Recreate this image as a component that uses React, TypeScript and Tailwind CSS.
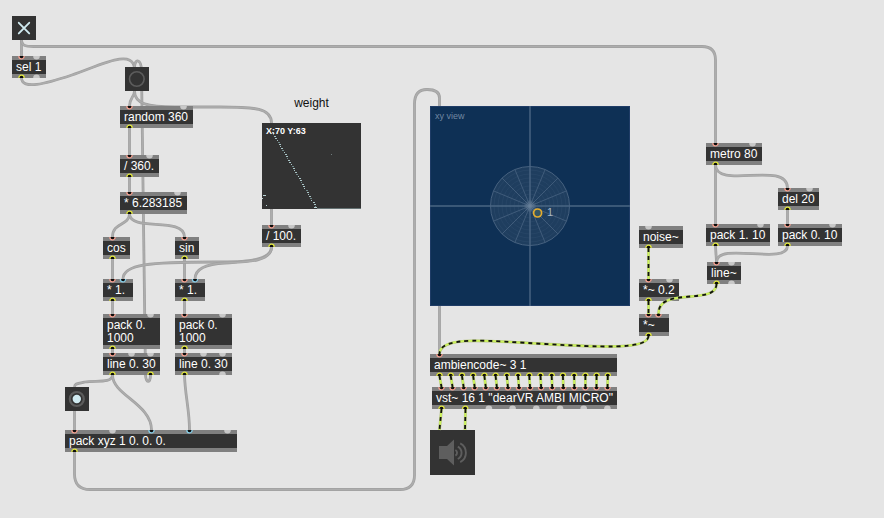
import React from "react";

type PortKind = "hot" | "cold" | "idle" | "out";
type Port = [number, PortKind];

interface PatchObject {
  id: string;
  text: string;
  x: number;
  y: number;
  w: number;
  ins: Port[];
  outs: Port[];
}

const range = (n: number) => Array.from({ length: n }, (_, i) => i);

const ambiOut = (i: number) => 9.5 + i * 11.22;
const vstIn = (i: number) => 9.5 + i * 11.07;

const OUT: Port[] = [[9.5, "out"]];
const IN: Port[] = [[9.5, "hot"]];

const objects: PatchObject[] = [
  { id: "sel", text: "sel 1", x: 12, y: 56, w: 34, ins: [...IN, [24.5, "idle"]], outs: [...OUT, [24.5, "idle"]] },
  { id: "random", text: "random 360", x: 120, y: 106, w: 73, ins: [...IN, [63.5, "idle"]], outs: OUT },
  { id: "div360", text: "/ 360.", x: 120, y: 155, w: 39, ins: [...IN, [29.5, "idle"]], outs: OUT },
  { id: "twopi", text: "* 6.283185", x: 120, y: 192, w: 67, ins: [...IN, [57.5, "idle"]], outs: OUT },
  { id: "cos", text: "cos", x: 103, y: 237, w: 27, ins: IN, outs: OUT },
  { id: "sin", text: "sin", x: 175, y: 237, w: 24, ins: IN, outs: OUT },
  { id: "mulA", text: "* 1.", x: 103, y: 279, w: 30, ins: [...IN, [20, "cold"]], outs: OUT },
  { id: "mulB", text: "* 1.", x: 175, y: 279, w: 30, ins: [...IN, [20, "cold"]], outs: OUT },
  { id: "packA", text: "pack 0. 1000", x: 103, y: 314, w: 57, ins: [...IN, [47.5, "idle"]], outs: OUT },
  { id: "packB", text: "pack 0. 1000", x: 175, y: 314, w: 57, ins: [...IN, [47.5, "idle"]], outs: OUT },
  { id: "lineA", text: "line 0. 30", x: 103, y: 353, w: 57, ins: [...IN, [28.5, "idle"], [47.5, "idle"]], outs: [...OUT, [47.5, "out"]] },
  { id: "lineB", text: "line 0. 30", x: 175, y: 353, w: 57, ins: [...IN, [28.5, "idle"], [47.5, "idle"]], outs: [...OUT, [47.5, "idle"]] },
  { id: "packxyz", text: "pack xyz 1 0. 0. 0.", x: 65, y: 430, w: 172, ins: [...IN, [47.5, "idle"], [86.5, "cold"], [124.5, "cold"], [162.5, "idle"]], outs: OUT },
  { id: "div100", text: "/ 100.", x: 262, y: 225, w: 39, ins: [...IN, [29.5, "idle"]], outs: OUT },
  { id: "ambi", text: "ambiencode~ 3 1", x: 430, y: 354, w: 187, ins: IN, outs: range(16).map((i): Port => [ambiOut(i), "out"]) },
  { id: "vst", text: 'vst~ 16 1 "dearVR AMBI MICRO"', x: 432, y: 387, w: 185, ins: range(16).map((i): Port => [vstIn(i), "hot"]), outs: range(8).map((i): Port => [9.5 + i * 23.7, i < 2 ? "out" : "idle"]) },
  { id: "noise", text: "noise~", x: 639, y: 226, w: 44, ins: [[9.5, "idle"]], outs: OUT },
  { id: "gain", text: "*~ 0.2", x: 639, y: 279, w: 40, ins: [...IN, [30.5, "idle"]], outs: OUT },
  { id: "vca", text: "*~", x: 639, y: 314, w: 30, ins: [...IN, [19.5, "hot"]], outs: OUT },
  { id: "metro", text: "metro 80", x: 706, y: 143, w: 56, ins: [...IN, [46.5, "idle"]], outs: OUT },
  { id: "del", text: "del 20", x: 778, y: 188, w: 41, ins: [...IN, [31.5, "idle"]], outs: OUT },
  { id: "pack1", text: "pack 1. 10", x: 706, y: 224, w: 64, ins: [...IN, [54.5, "idle"]], outs: OUT },
  { id: "pack0", text: "pack 0. 10", x: 778, y: 224, w: 64, ins: [...IN, [54.5, "idle"]], outs: OUT },
  { id: "linesig", text: "line~", x: 707, y: 262, w: 34, ins: [...IN, [24.5, "idle"]], outs: [...OUT, [24.5, "idle"]] },
];

const controlCords = [
  "M21.5 40V56",
  "M21.5 40C21.5 45 24 46.5 34 46.5H702Q715.5 46.5 715.5 60V143",
  "M21.5 78C22 90 45 84 72 75S132 48 134.5 68",
  "M150.5 375C150.5 383 146 384 145.5 375L141.5 70C141 59 135 58 134.5 67",
  "M134.5 91C134.5 97 129.5 98 129.5 106",
  "M134.5 91C134.5 104 148 107 175 107H220C255 107 271.5 108 271.5 123",
  "M129.5 128V155",
  "M129.5 177V192",
  "M129.5 214C129 226 112.5 222 112.5 237",
  "M129.5 214C130 232 184.5 216 184.5 237",
  "M112.5 259V279",
  "M184.5 259V279",
  "M271.5 209V225",
  "M271.5 247C271.5 262 240 262 215 262C150 262 123 264 123 279",
  "M271.5 247C271.5 262 245 262 225 263S195 270 195 279",
  "M112.5 301V314",
  "M184.5 301V314",
  "M112.5 349V353",
  "M184.5 349V353",
  "M112.5 375C112 384 95 380 85 382S74.5 384 74.5 388",
  "M112.5 375C112.5 395 151.5 404 151.5 430",
  "M184.5 375C185 395 189.5 410 189.5 430",
  "M74.5 411V430",
  "M74.5 452V474Q74.5 489.5 90 489.5H400Q414.5 489.5 414.5 475V104Q414.5 89.5 427 89.5Q439.5 89.5 439.5 98V106",
  "M439.5 306V354",
  "M715.5 165V224",
  "M715.5 165C716 190 787 160 787.5 188",
  "M787.5 210V224",
  "M715.5 246L716.5 262",
  "M787.5 246C787 266 717 241 716.5 262",
];

const signalCords = [
  "M648.5 248V279",
  "M648.5 301V314",
  "M716.5 284C716 306 658 286 658.5 314",
  "M648.5 336C648 350 600 347 545 344S440 335 439.5 354",
  "M441.5 409L439.5 430",
  "M465.5 409L465 430",
  ...range(16).map((i) => `M${430 + ambiOut(i)} 376L${432 + vstIn(i)} 387`),
];

const ring: Record<PortKind, string> = {
  hot: "#f5a090",
  cold: "#86cfe9",
  out: "#e0e63e",
  idle: "#c8c8c8",
};

function Ports({ ports, side }: { ports: Port[]; side: "top" | "bottom" }) {
  const cy = side === "top" ? 0.3 : 3.7;
  return (
    <svg className="block h-1 w-full shrink-0 bg-[#808080]" aria-hidden="true">
      {ports.map(([cx, kind]) =>
        kind === "idle" ? (
          <circle key={cx} cx={cx} cy={cy} r={3.3} fill={ring.idle} />
        ) : (
          <circle key={cx} cx={cx} cy={cy} r={2.6} fill="#0c0c0c" stroke={ring[kind]} strokeWidth={1.3} />
        )
      )}
    </svg>
  );
}

function ObjectBox({ o }: { o: PatchObject }) {
  const twoLines = o.text === "pack 0. 1000";
  return (
    <div className="absolute flex flex-col bg-[#333333]" style={{ left: o.x, top: o.y, width: o.w }}>
      <Ports ports={o.ins} side="top" />
      <div
        className={
          twoLines
            ? "pl-1 pt-px text-[12px] leading-[13px] text-white"
            : "whitespace-nowrap pl-1 pt-px text-[12px] leading-[13px] text-white"
        }
      >
        {o.text}
      </div>
      <Ports ports={o.outs} side="bottom" />
    </div>
  );
}

function Toggle() {
  return (
    <label className="absolute left-3 top-4 block size-6 bg-[#333333]">
      <input type="checkbox" defaultChecked aria-label="Start" className="peer block size-6 appearance-none" />
      <svg viewBox="0 0 24 24" className="pointer-events-none absolute inset-0 hidden size-6 peer-checked:block" aria-hidden="true">
        <path d="M6.8 6.8L17.2 17.4M17.2 6.8L6.8 17.4" stroke="#d0eaf0" strokeWidth={1.9} strokeLinecap="round" />
      </svg>
    </label>
  );
}

function Bang({ className, lit, label }: { className: string; lit?: boolean; label: string }) {
  return (
    <button type="button" aria-label={label} className={`absolute block size-6 bg-[#333333] ${className}`}>
      <svg viewBox="0 0 24 24" className="size-6" aria-hidden="true">
        <circle cx={11.8} cy={12} r={lit ? 7 : 7.3} fill="none" stroke="#5c5c5c" strokeWidth={lit ? 2.2 : 1.6} />
        {lit && <circle cx={11.8} cy={12} r={4.2} fill="#d0eaf0" />}
      </svg>
    </button>
  );
}

function WeightTable() {
  return (
    <figure className="absolute left-[262px] top-24 flex w-[99px] flex-col items-center gap-[13px]">
      <figcaption className="text-[12px] leading-[14px] text-[#111111]">weight</figcaption>
      <div className="relative h-[86px] w-full bg-[#333333] pl-1 pt-0.5 text-[9px] font-bold leading-[13px] text-white">
        <svg className="absolute inset-0 size-full" aria-hidden="true">
          {range(38).map((i) => (
            <rect
              key={i}
              x={Math.round(10 + i * 1.16)}
              y={9 + i * 2}
              width={i % 3 === 1 ? 1 : 2}
              height={1}
              fill={i % 4 === 1 ? "#71898a" : "#a9c4c6"}
            />
          ))}
          <path d="M1 72.5H4M0 75.5H1M4 82.5H5M52 84.5H55" stroke="#b9d3d5" />
          <path d="M55 85.5H99" stroke="#657273" />
          <path d="M69 31.5H70" stroke="#6f7c7d" />
        </svg>
        <span className="relative block">X:70 Y:63</span>
      </div>
    </figure>
  );
}

function XYView() {
  return (
    <div className="absolute left-[430px] top-[106px] size-[200px] bg-[#0e3055]">
      <svg viewBox="0 0 200 200" className="absolute inset-0 size-full" aria-label="Source position">
        <defs>
          <radialGradient id="hub">
            <stop offset="0" stopColor="#8fa3b8" stopOpacity={0.5} />
            <stop offset="1" stopColor="#8fa3b8" stopOpacity={0} />
          </radialGradient>
        </defs>
        <rect x={0.5} y={0.5} width={199} height={199} fill="none" stroke="#1f3c66" />
        <circle cx={100} cy={100} r={39.5} fill="#1f3e5f" stroke="#46617f" />
        {range(9).map((i) => (
          <circle key={i} cx={100} cy={100} r={4 + i * 4} fill="none" stroke="#2a4869" strokeWidth={0.7} />
        ))}
        {range(16)
          .filter((i) => i % 4 !== 0)
          .map((i) => {
            const a = (i * Math.PI) / 8;
            return (
              <path key={i} d={`M100 100L${100 + 39.5 * Math.cos(a)} ${100 + 39.5 * Math.sin(a)}`} stroke="#405c7b" strokeWidth={1} />
            );
          })}
        <path d="M0 100H200M100 0V200" stroke="#4a6583" strokeWidth={1.4} />
        <circle cx={100} cy={100} r={7} fill="url(#hub)" />
        <circle cx={107.6} cy={107} r={4} fill="#365663" stroke="#e6ad2e" strokeWidth={1.7} />
        <text x={117} y={110} fill="#a9b6c4" className="text-[11px]">
          1
        </text>
      </svg>
      <div className="relative pl-[5px] pt-1 text-[9px] leading-[13px] text-[#7188a2]">xy view</div>
    </div>
  );
}

function Speaker() {
  return (
    <button type="button" aria-label="Audio on" className="absolute left-[430px] top-[430px] block size-[45px] bg-[#333333]">
      <svg viewBox="0 0 45 45" className="size-full" aria-hidden="true">
        <path d="M9 16H17L24 9.5V35.5L17 29H9Z" fill="#5e5e5e" />
        <g fill="none" stroke="#5e5e5e" strokeWidth={1.9}>
          <path d="M25.4 20A3.2 3.2 0 0 1 25.4 25.6" />
          <path d="M27.8 16.6A7 7 0 0 1 27.8 29" />
          <path d="M30.2 13.4A10.6 10.6 0 0 1 30.2 32.2" />
        </g>
      </svg>
    </button>
  );
}

export default function App() {
  return (
    <main className="relative min-h-screen w-full overflow-hidden bg-[#e5e5e5] font-['Liberation_Sans',Arial,sans-serif]">
      <svg className="absolute inset-0 size-full" fill="none" aria-hidden="true">
        {controlCords.map((d) => (
          <g key={d}>
            <path d={d} stroke="#a0a0a0" strokeWidth={2.8} />
            <path d={d} stroke="#adadad" strokeWidth={1.4} />
          </g>
        ))}
      </svg>
      {objects.map((o) => (
        <ObjectBox key={o.id} o={o} />
      ))}
      <Toggle />
      <Bang className="left-[125px] top-[67px]" label="Trigger random" />
      <Bang className="left-[65px] top-[387px]" label="Send position" lit />
      <WeightTable />
      <XYView />
      <Speaker />
      <svg className="pointer-events-none absolute inset-0 size-full" fill="none" aria-hidden="true">
        {signalCords.map((d) => (
          <g key={d}>
            <path d={d} stroke="#b4c088" strokeWidth={2.8} />
            <path d={d} stroke="#ccf25c" strokeWidth={2} />
            <path d={d} stroke="#111111" strokeWidth={1.8} strokeDasharray="4 4" />
          </g>
        ))}
      </svg>
    </main>
  );
}
